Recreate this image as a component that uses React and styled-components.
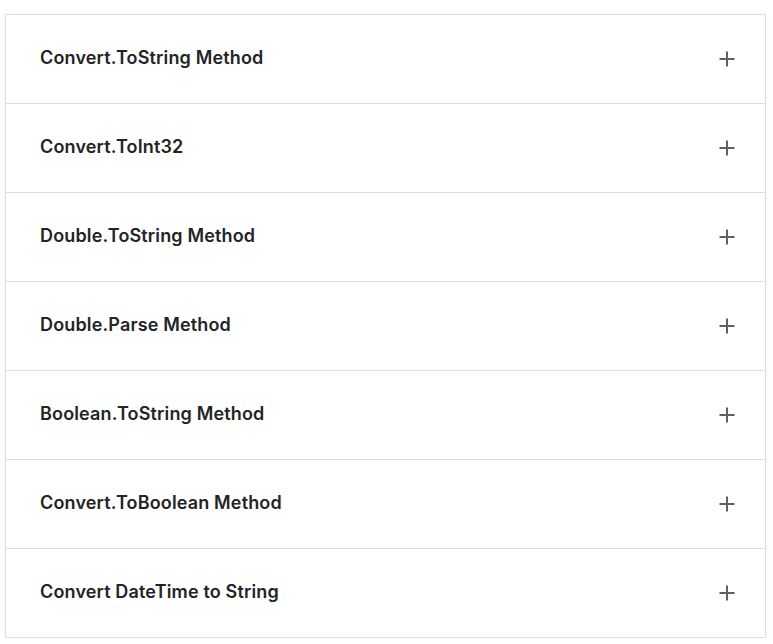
import React, { useState } from 'react'
import styled, { createGlobalStyle } from 'styled-components'

const Global = createGlobalStyle`
	html, body {
		margin: 0;
		background: #ffffff;
		font-family: Inter, 'Noto Sans', sans-serif;
	}
`

const Page = styled.div`
	padding: 14px 0 0 5px;
`

const Card = styled.div`
	width: 761px;
	box-sizing: border-box;
	border: 1px solid #dedede;
	background: #fff;
	box-shadow: 0 0 6px rgba(0, 0, 0, 0.05);
`

const Item = styled.div`
	border-bottom: ${(p) => (p.$last ? 'none' : '1px solid #dedede')};
`

const Header = styled.button`
	width: 100%;
	height: 88px;
	display: flex;
	align-items: center;
	justify-content: space-between;
	padding: 0 30px 0 34px;
	box-sizing: border-box;
	border: none;
	background: transparent;
	cursor: pointer;
	text-align: left;
`

const Title = styled.span`
	font-family: Inter, 'Noto Sans', sans-serif;
	font-size: 18px;
	line-height: 22px;
	font-weight: 600;
	letter-spacing: 0.15px;
	color: #222426;
	margin-bottom: 2px;
`

const Body = styled.div`
	padding: 0 34px 24px;
	font-size: 15px;
	color: #555;
`

const Plus = ({ open }) => (
	<svg width='16' height='16' viewBox='0 0 16 16'>
		<rect x='0.5' y='7' width='15' height='2' fill='#5a6262' />
		{!open && <rect x='7' y='0.5' width='2' height='15' fill='#5a6262' />}
	</svg>
)

const items = [
	'Convert.ToString Method',
	'Convert.ToInt32',
	'Double.ToString Method',
	'Double.Parse Method',
	'Boolean.ToString Method',
	'Convert.ToBoolean Method',
	'Convert DateTime to String',
]

export default function App() {
	const [open, setOpen] = useState(null)

	return (
		<Page>
			<Global />
			<Card>
				{items.map((label, i) => (
					<Item key={label} $last={i === items.length - 1}>
						<Header onClick={() => setOpen(open === i ? null : i)}>
							<Title>{label}</Title>
							<Plus open={open === i} />
						</Header>
						{open === i && <Body>Details about {label}.</Body>}
					</Item>
				))}
			</Card>
		</Page>
	)
}
